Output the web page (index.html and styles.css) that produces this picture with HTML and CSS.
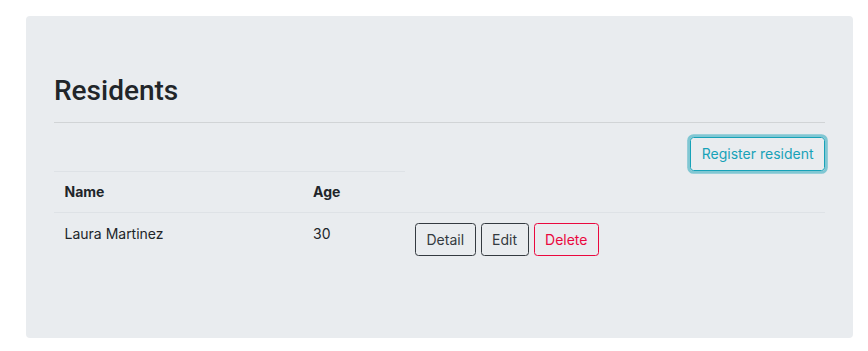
FILE: index.html
```html
<!DOCTYPE html>
<html lang="en">
<head>
<meta charset="utf-8">
<title>Residents</title>
<link rel="stylesheet" href="styles.css">
</head>
<body>
<div class="page">
  <div class="jumbotron">
    <h2 class="title">Residents</h2>
    <hr class="divider">
    <div class="toolbar">
      <button class="btn btn-info focus">Register resident</button>
    </div>
    <table class="table">
      <thead>
        <tr>
          <th class="col-name">Name</th>
          <th class="col-age">Age</th>
        </tr>
      </thead>
      <tbody>
        <tr>
          <td class="col-name">Laura Martinez</td>
          <td class="col-age">30</td>
          <td class="col-actions">
            <button class="btn btn-dark">Detail</button>
            <button class="btn btn-dark">Edit</button>
            <button class="btn btn-danger">Delete</button>
          </td>
        </tr>
      </tbody>
    </table>
  </div>
</div>
</body>
</html>
```

FILE: styles.css
```css
html, body {
  margin: 0;
  padding: 0;
  background: #fff;
}
body {
  font-family: Inter, Roboto, "Liberation Sans", Arial, sans-serif;
  font-size: 14px;
  line-height: 1.5;
  color: #212529;
}
.page {
  padding: 16px 15px 13px 26px;
}
.jumbotron {
  background: #e9ecef;
  border-radius: 4px;
  padding: 58px 28px 56px 28px;
}
.title {
  margin: 0;
  font-family: Roboto, "Liberation Sans", Arial, sans-serif;
  font-size: 28px;
  font-weight: 500;
  line-height: 1.2;
}
.divider {
  margin: 14px 0 14.5px 0;
  border: 0;
  border-top: 1px solid rgba(0, 0, 0, 0.1);
  height: 0;
}
.toolbar {
  text-align: right;
  font-size: 0;
}
.btn {
  display: inline-block;
  font-family: inherit;
  font-size: 14px;
  line-height: 21px;
  font-weight: 400;
  padding: 5.25px 10.5px;
  border: 1px solid transparent;
  border-radius: 3.5px;
  background: transparent;
  vertical-align: middle;
  cursor: pointer;
  margin: 0;
}
.btn-info {
  color: #17a2b8;
  border-color: #17a2b8;
}
.btn-info.focus {
  box-shadow: 0 0 0 2.8px rgba(23, 162, 184, 0.5);
}
.btn-dark {
  color: #343a40;
  border-color: #343a40;
}
.btn-danger {
  color: #ea083e;
  border-color: #ea083e;
}
.table {
  width: 100%;
  border-collapse: collapse;
  margin-bottom: 14px;
}
.table th,
.table td {
  text-align: left;
  vertical-align: top;
  padding: 9.5px 10.5px 9.5px 10.5px;
  border-top: 1px solid #dee2e6;
}
.table th {
  font-weight: 700;
}
.table td {
  padding-top: 10px;
  padding-bottom: 11.5px;
}
.col-name {
  width: 227.5px;
}
.col-age {
  width: 81px;
}
.col-actions {
  font-size: 0;
}
.col-actions .btn {
  margin-right: 5px;
}
```
